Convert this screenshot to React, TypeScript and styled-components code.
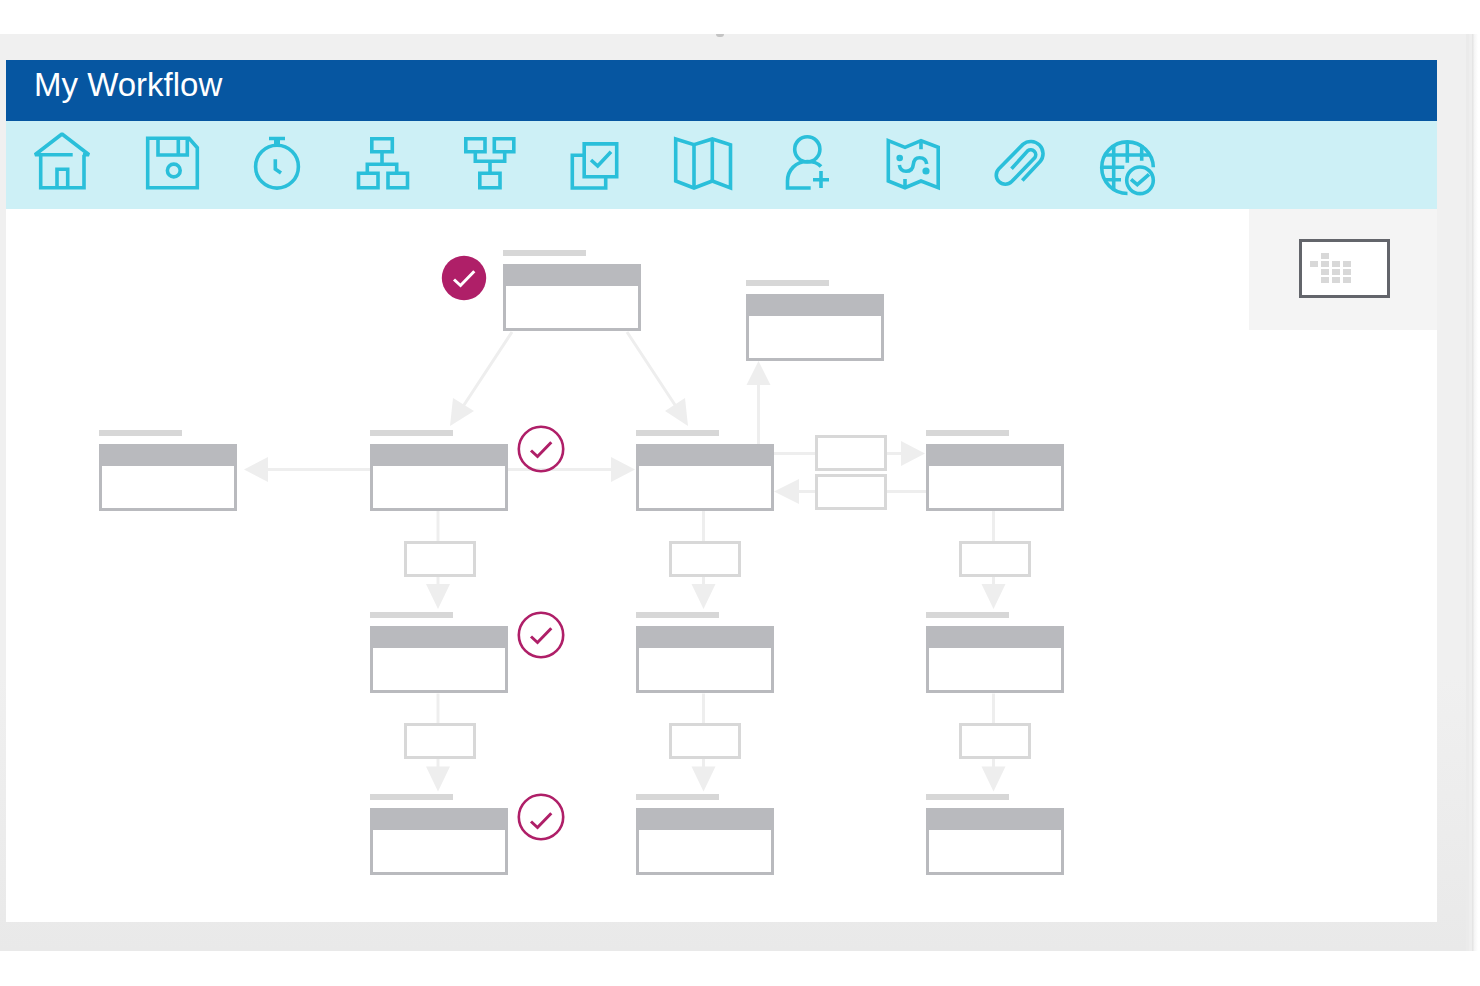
import React from "react";
import styled, { createGlobalStyle } from "styled-components";

const GlobalStyle = createGlobalStyle`
  * { box-sizing: border-box; }
  body {
    margin: 0;
    background: #ffffff;
    font-family: "Liberation Sans", Arial, sans-serif;
  }
`;

const Page = styled.div`
  padding: 34px 2px 34px 0;
`;

const Device = styled.div`
  position: relative;
  padding: 26px 41px 29px 6px;
  background: linear-gradient(to bottom, #f0f0f0 0%, #f0f0f0 70%, #e9e9e9 100%);
`;

const DeviceEdge = styled.div`
  position: absolute;
  top: 0;
  right: 0;
  bottom: 0;
  width: 12px;
  background: linear-gradient(
    to right,
    #ebebeb 0, #ebebeb 3px,
    #eeeeee 3px, #eeeeee 6px,
    #e5e5e5 6px, #e5e5e5 7px,
    #f4f4f4 8px, #ffffff 12px
  );
`;

const Camera = styled.div`
  position: absolute;
  top: 0;
  left: 716px;
  width: 8px;
  height: 3px;
  border-radius: 0 0 4px 4px;
  background: #c4c4c4;
`;

const TitleBar = styled.header`
  display: flex;
  align-items: flex-start;
  height: 61px;
  padding: 5px 28px;
  background: #0656a1;
`;

const Title = styled.h1`
  margin: 0;
  color: #ffffff;
  font-size: 33px;
  font-weight: 400;
  line-height: 40px;
`;

const Toolbar = styled.nav`
  display: flex;
  align-items: center;
  gap: 55px;
  height: 88px;
  padding: 0 27px;
  background: #cdf0f6;
`;

const ToolButton = styled.button`
  flex: none;
  padding: 0;
  border: 0;
  background: none;
  cursor: pointer;
`;

const ToolIcon = styled.svg`
  display: block;
  overflow: visible;
  fill: none;
  stroke: #2abfda;
  stroke-width: 3.6;
`;

const Canvas = styled.main`
  position: relative;
  min-height: 713px;
  background: #ffffff;
  overflow: hidden;
`;

const Connectors = styled.svg`
  position: absolute;
  top: 0;
  left: 0;
  stroke: #eeeeee;
  stroke-width: 3;

  polygon {
    fill: #eeeeee;
    stroke: none;
  }
`;

const Node = styled.div<{ $x: number; $y: number }>`
  position: absolute;
  left: ${(p) => p.$x}px;
  top: ${(p) => p.$y}px;
  display: flex;
  flex-direction: column;
  gap: 8px;
  width: 138px;
`;

const NodeLabel = styled.div`
  width: 83px;
  height: 6px;
  background: #d7d7d7;
`;

const NodeCard = styled.div`
  height: 67px;
  border: 3px solid #b9babe;
  border-top-width: 22px;
  background: #ffffff;
`;

const Step = styled.div<{ $x: number; $y: number }>`
  position: absolute;
  left: ${(p) => p.$x}px;
  top: ${(p) => p.$y}px;
  width: 72px;
  height: 36px;
  border: 3px solid #d8d8d8;
  background: #ffffff;
`;

const Badge = styled.svg<{ $x: number; $y: number; $solid?: boolean }>`
  position: absolute;
  left: ${(p) => p.$x}px;
  top: ${(p) => p.$y}px;
  fill: none;
  stroke-width: 3;

  circle {
    fill: ${(p) => (p.$solid ? "#af1f68" : "none")};
    stroke: #af1f68;
    stroke-width: ${(p) => (p.$solid ? 0 : 2.6)};
  }

  path {
    stroke: ${(p) => (p.$solid ? "#ffffff" : "#af1f68")};
  }
`;

const MiniMap = styled.aside`
  position: absolute;
  top: 0;
  right: 0;
  width: 188px;
  height: 121px;
  padding: 30px 47px 0 50px;
  background: #f4f4f4;
`;

const MiniMapView = styled.div`
  display: grid;
  grid-template-columns: repeat(4, 8px);
  grid-auto-rows: 6px;
  gap: 2px 3px;
  height: 59px;
  padding: 11px 8px;
  border: 3px solid #63656b;
  background: #ffffff;
`;

const MiniMapCell = styled.span<{ $on: boolean }>`
  background: ${(p) => (p.$on ? "#d8d8d8" : "transparent")};
`;

const tools: { name: string; width: number; art: React.ReactNode }[] = [
  {
    name: "Home",
    width: 58,
    art: (
      <>
        <path d="M39.7 22.8H2L29 2L56 22.8H50" strokeLinejoin="bevel" />
        <path d="M7.7 22.8V55.7H51V22.8" />
        <path d="M24 55.7V37.2H34.7V55.7" />
      </>
    ),
  },
  {
    name: "Save",
    width: 53,
    art: (
      <>
        <path d="M1.7 6.3H43L51.3 15.7V55.7H1.7Z" />
        <path d="M12 6.3V23H41.3V6.3M32.3 6.3V23" />
        <circle cx="27.8" cy="38.5" r="6.4" />
      </>
    ),
  },
  {
    name: "Timer",
    width: 47,
    art: (
      <>
        <circle cx="23" cy="34.7" r="21.4" />
        <path d="M15 6.5H31M21.3 27.3V37L27 41" />
        <path d="M23 6.5V13" strokeWidth="6" />
      </>
    ),
  },
  {
    name: "Hierarchy",
    width: 53,
    art: (
      <>
        <path d="M15.8 6.7H36.3V19.7H15.8Z" />
        <path d="M2.5 41.3H22V55.7H2.5ZM32 41.3H51.5V55.7H32Z" />
        <path d="M26 19.7V32.3M11.3 41.3V32.3H40.7V41.3" />
      </>
    ),
  },
  {
    name: "Merge",
    width: 52,
    art: (
      <>
        <path d="M1.8 6.7H21V19.7H1.8ZM30.3 6.7H49.8V19.7H30.3Z" />
        <path d="M15.8 41.3H36V55.7H15.8Z" />
        <path d="M11.3 19.7V29.3H40.7V19.7M26 29.3V41.3" />
      </>
    ),
  },
  {
    name: "Tasks",
    width: 48,
    art: (
      <>
        <path d="M13.2 11.9H45.7V44.7H13.2Z" />
        <path d="M13 23.3H1.3V56H34.7V44.7" />
        <path d="M20 28L26.7 34L40 19.7" />
      </>
    ),
  },
  {
    name: "Map",
    width: 57,
    art: (
      <>
        <path d="M1.7 7L20 12.7L38.3 7L56.5 12.7V56L38.3 49L20 56L1.7 49Z" />
        <path d="M20 12.7V56M38.3 7V49" />
      </>
    ),
  },
  {
    name: "Add user",
    width: 45,
    art: (
      <>
        <circle cx="21.3" cy="17.3" r="12.6" />
        <path d="M35 34.5C32 31 27 29.5 21.3 29.5C10 29.5 1.5 38 1.5 49V56H24.7" />
        <path d="M27 47.7H43M35 39V56" />
      </>
    ),
  },
  {
    name: "Route map",
    width: 54,
    art: (
      <>
        <path d="M2.3 8.7L19 15.3L35 8.7L52.2 15.3V55.7L35 49L19 55.7L2.3 49Z" />
        <path d="M35 8.7V17.3M19 47V55.7" />
        <path d="M13.3 33C14 37 16.5 39.3 20 39.3C25 39.3 27 36 27.3 32.5C27.8 28 30 25.7 33.5 25.7C37.5 25.7 40.3 28 40.7 32" />
        <circle cx="13.7" cy="26" r="1.5" />
        <circle cx="40" cy="39" r="1.8" />
      </>
    ),
  },
  {
    name: "Attach",
    width: 50,
    art: (
      <path d="M27.3 48.5L45.1 29.6A12.2 12.2 0 0 0 27.9 12.4L3.9 36.8A9 9 0 0 0 16.7 49.6L39.7 25.8A5 5 0 0 0 32.7 18.8L16.5 36.8" />
    ),
  },
  {
    name: "Publish",
    width: 55,
    art: (
      <>
        <path d="M53.3 35.3A25.8 25.8 0 1 0 27.5 61.5" />
        <path d="M13.7 13V58M27.3 9V30.7M41.7 13V28.7" />
        <path d="M4.5 23H50M1 35.3H24.3M5 47.7H21" />
        <circle cx="40" cy="48.3" r="13.3" />
        <path d="M31 47.3L37.3 52.7L49 42.3" />
      </>
    ),
  },
];

const nodes: [number, number][] = [
  [497, 41],
  [740, 71],
  [93, 221],
  [364, 221],
  [630, 221],
  [920, 221],
  [364, 403],
  [630, 403],
  [920, 403],
  [364, 585],
  [630, 585],
  [920, 585],
];

const steps: [number, number][] = [
  [809, 226],
  [809, 265],
  [398, 332],
  [663, 332],
  [953, 332],
  [398, 514],
  [663, 514],
  [953, 514],
];

const columns = [432, 697.5, 987.5];
const rows = [302, 484.5];

const miniMapCells = [
  [0, 1, 0, 0],
  [1, 1, 1, 1],
  [0, 1, 1, 1],
  [0, 1, 1, 1],
].flat();

function CheckBadge(props: { x: number; y: number; solid?: boolean; drop?: number }) {
  const d = props.drop ?? 0;
  return (
    <Badge
      $x={props.x}
      $y={props.y}
      $solid={props.solid}
      width="48"
      height="48"
      role="img"
      aria-label={props.solid ? "Active" : "Complete"}
    >
      <circle cx="24" cy="24" r="22.2" />
      <path d={`M14 ${25.5 + d}L20.5 ${31.5 + d}L34.3 ${17.3 + d}`} />
    </Badge>
  );
}

export default function App() {
  return (
    <>
      <GlobalStyle />
      <Page>
        <Device>
          <Camera />
          <DeviceEdge />
          <TitleBar>
            <Title>My Workflow</Title>
          </TitleBar>
          <Toolbar aria-label="Workflow tools">
            {tools.map((tool) => (
              <ToolButton key={tool.name} type="button" aria-label={tool.name}>
                <ToolIcon width={tool.width} height="66">
                  {tool.art}
                </ToolIcon>
              </ToolButton>
            ))}
          </Toolbar>
          <Canvas>
            <Connectors width="1100" height="713" aria-hidden="true">
              {columns.map((x) =>
                rows.map((y) => (
                  <g key={`${x}-${y}`}>
                    <path d={`M${x} ${y}V${y + 74}`} />
                    <polygon points={`${x - 12},${y + 73} ${x + 12},${y + 73} ${x},${y + 98}`} />
                  </g>
                ))
              )}
              <path d="M506 123L456 199M621 123L671 199" />
              <polygon points="444,217 447,189 468,202" />
              <polygon points="682,217 679,189 659,202" />
              <path d="M364 260.5H261M502 260.5H606" />
              <polygon points="238,260.5 262,248 262,273" />
              <polygon points="629,260.5 605,248 605,273" />
              <path d="M752.5 235V175" />
              <polygon points="752.5,152 740.5,176 764.5,176" />
              <path d="M768 244.5H896M792 282.5H920" />
              <polygon points="919,244.5 895,232 895,257" />
              <polygon points="768,282.5 793,270 793,295" />
            </Connectors>
            {nodes.map(([x, y]) => (
              <Node key={`${x}-${y}`} $x={x} $y={y}>
                <NodeLabel />
                <NodeCard />
              </Node>
            ))}
            {steps.map(([x, y]) => (
              <Step key={`${x}-${y}`} $x={x} $y={y} />
            ))}
            <CheckBadge x={434} y={45} solid />
            <CheckBadge x={511} y={216} />
            <CheckBadge x={511} y={402} />
            <CheckBadge x={511} y={584} drop={3} />
            <MiniMap aria-label="Overview">
              <MiniMapView>
                {miniMapCells.map((on, i) => (
                  <MiniMapCell key={i} $on={on === 1} />
                ))}
              </MiniMapView>
            </MiniMap>
          </Canvas>
        </Device>
      </Page>
    </>
  );
}
